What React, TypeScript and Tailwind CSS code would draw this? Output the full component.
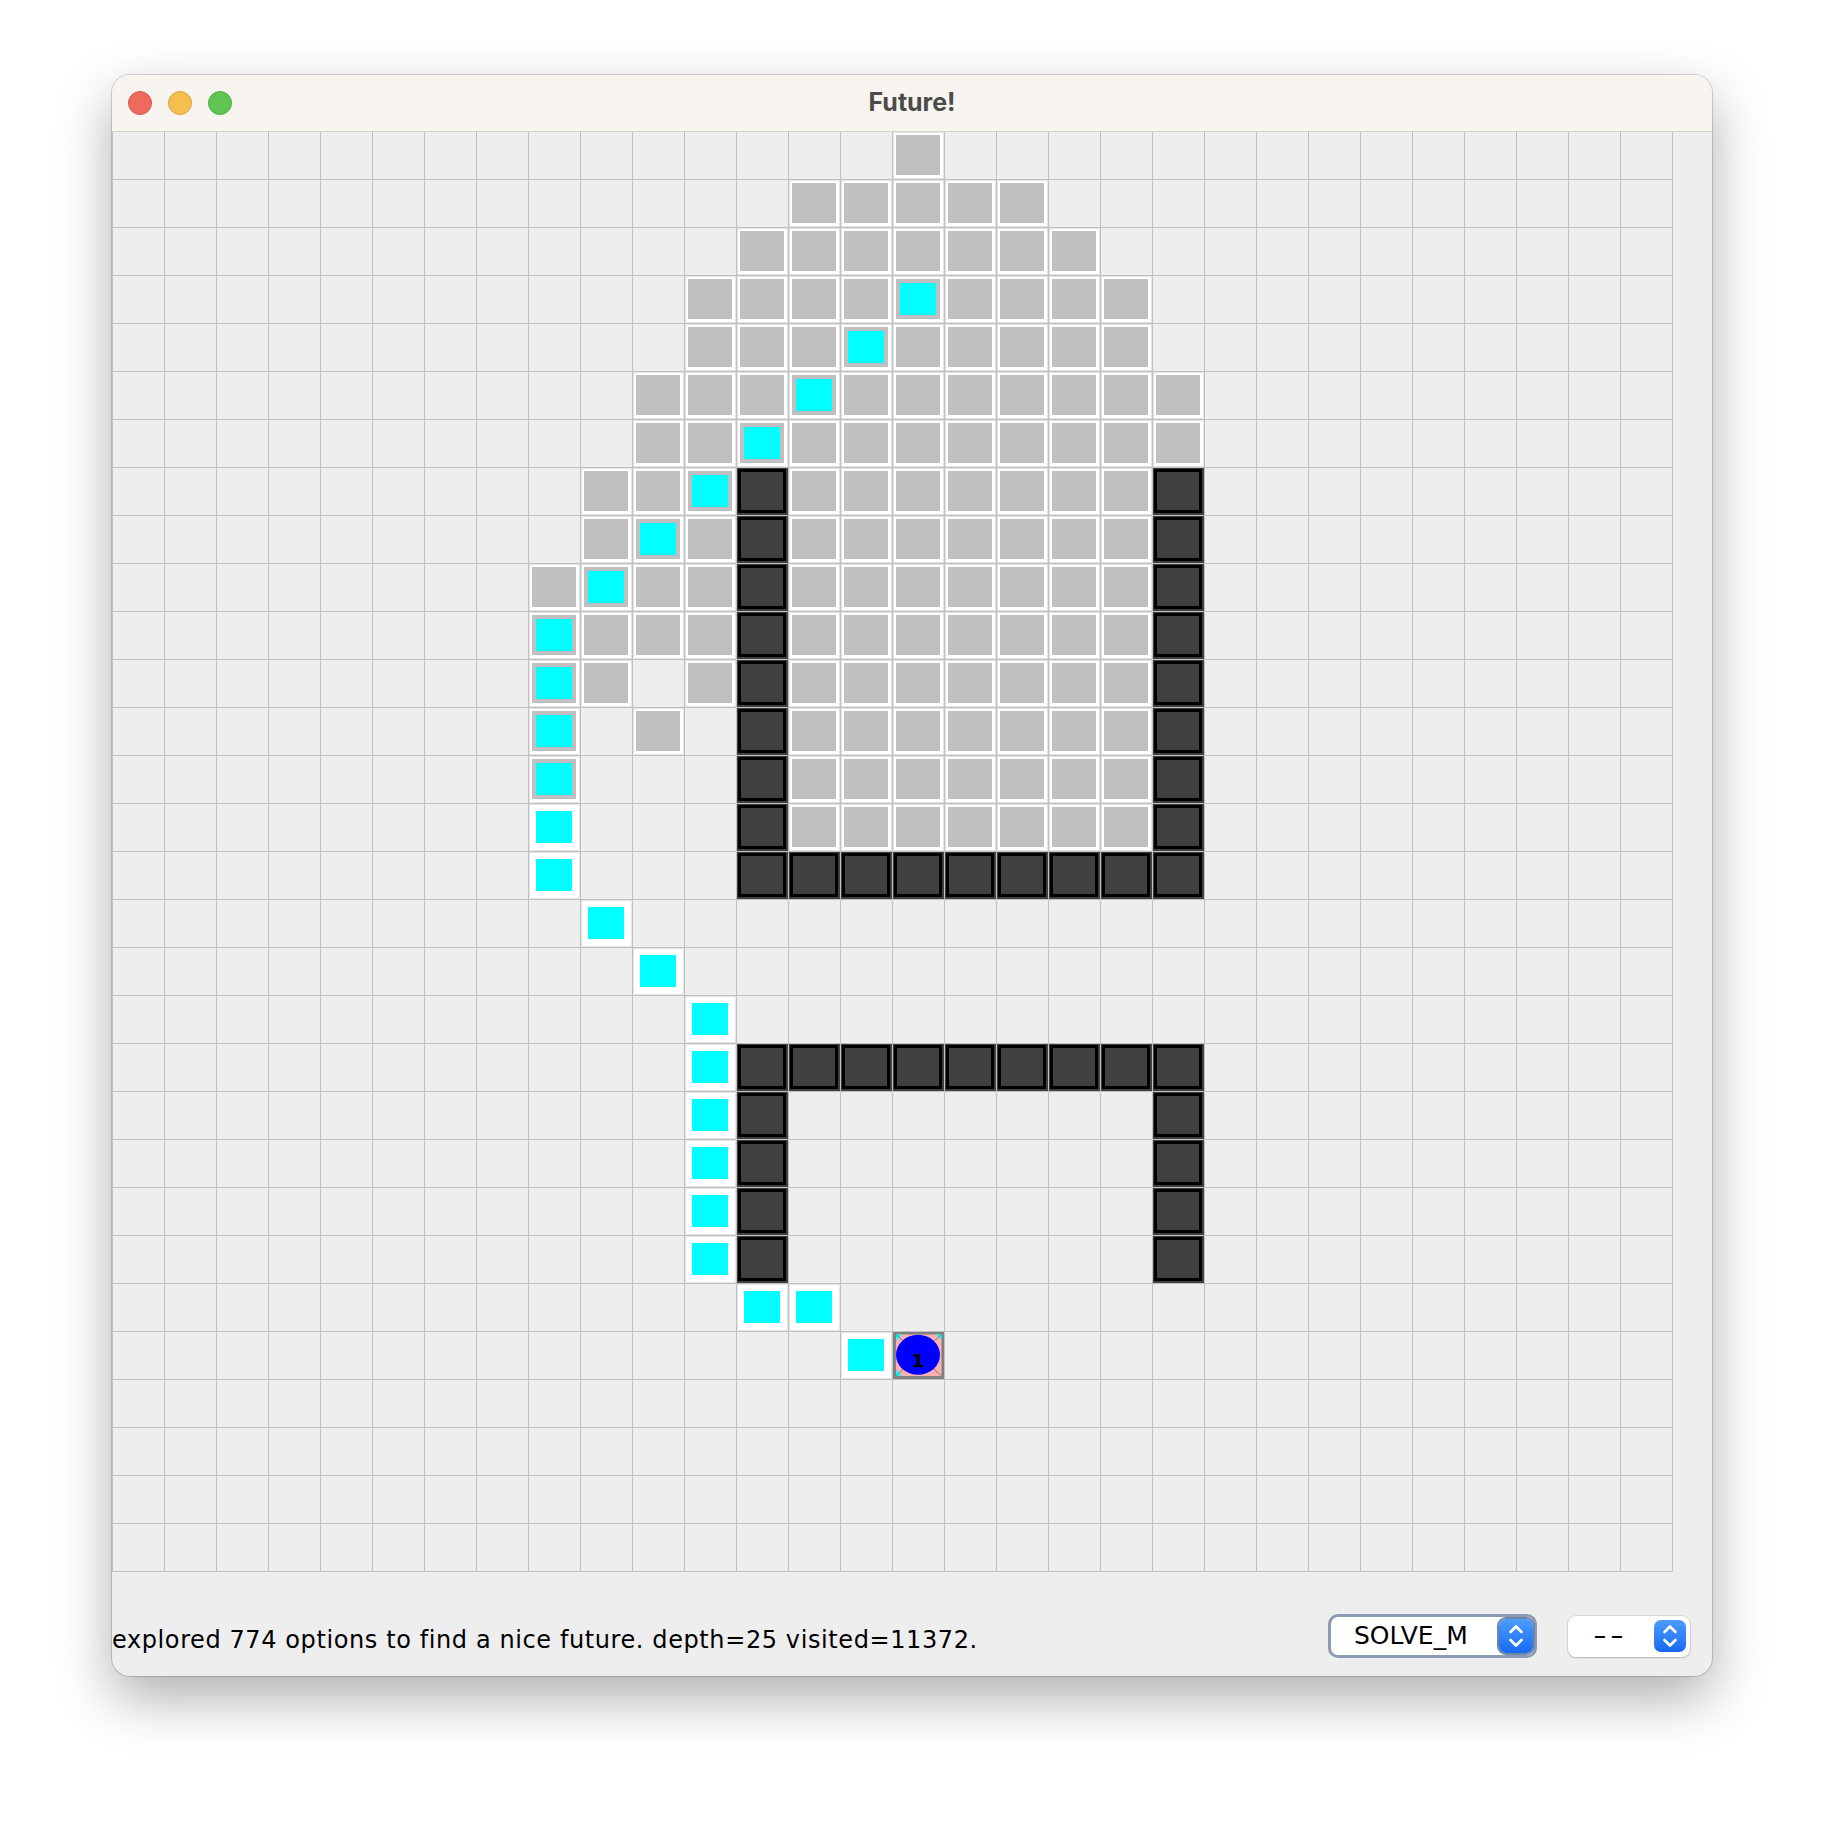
import React from "react";

type Seg = [number, number, string];

function row(segs: Seg[]): string {
  const cells = Array(30).fill(".");
  for (const [from, to, kind] of segs) {
    for (let i = from; i <= to; i++) cells[i] = kind;
  }
  return cells.join("");
}

// . empty, g explored, c path over explored, C path, d wall, A agent
const ROWS: string[] = [
  row([[15, 15, "g"]]),
  row([[13, 17, "g"]]),
  row([[12, 18, "g"]]),
  row([[11, 19, "g"], [15, 15, "c"]]),
  row([[11, 19, "g"], [14, 14, "c"]]),
  row([[10, 20, "g"], [13, 13, "c"]]),
  row([[10, 20, "g"], [12, 12, "c"]]),
  row([[9, 10, "g"], [11, 11, "c"], [12, 12, "d"], [13, 19, "g"], [20, 20, "d"]]),
  row([[9, 9, "g"], [10, 10, "c"], [11, 11, "g"], [12, 12, "d"], [13, 19, "g"], [20, 20, "d"]]),
  row([[8, 8, "g"], [9, 9, "c"], [10, 11, "g"], [12, 12, "d"], [13, 19, "g"], [20, 20, "d"]]),
  row([[8, 8, "c"], [9, 11, "g"], [12, 12, "d"], [13, 19, "g"], [20, 20, "d"]]),
  row([[8, 8, "c"], [9, 9, "g"], [11, 11, "g"], [12, 12, "d"], [13, 19, "g"], [20, 20, "d"]]),
  row([[8, 8, "c"], [10, 10, "g"], [12, 12, "d"], [13, 19, "g"], [20, 20, "d"]]),
  row([[8, 8, "c"], [12, 12, "d"], [13, 19, "g"], [20, 20, "d"]]),
  row([[8, 8, "C"], [12, 12, "d"], [13, 19, "g"], [20, 20, "d"]]),
  row([[8, 8, "C"], [12, 20, "d"]]),
  row([[9, 9, "C"]]),
  row([[10, 10, "C"]]),
  row([[11, 11, "C"]]),
  row([[11, 11, "C"], [12, 20, "d"]]),
  row([[11, 11, "C"], [12, 12, "d"], [20, 20, "d"]]),
  row([[11, 11, "C"], [12, 12, "d"], [20, 20, "d"]]),
  row([[11, 11, "C"], [12, 12, "d"], [20, 20, "d"]]),
  row([[11, 11, "C"], [12, 12, "d"], [20, 20, "d"]]),
  row([[12, 13, "C"]]),
  row([[14, 14, "C"], [15, 15, "A"]]),
  row([]),
  row([]),
  row([]),
  row([]),
];

function Agent() {
  return (
    <svg width="51" height="47" viewBox="0 0 51 47" className="block">
      <rect x="0" y="0" width="51" height="47" fill="#808080" />
      <rect x="3" y="2.5" width="45.5" height="41.5" fill="#ffb0b0" />
      <polygon points="3,2.5 9,2.5 3,9" fill="#00ffff" />
      <polygon points="3,44 9,44 3,37.5" fill="#00ffff" />
      <polygon points="48.5,2.5 43,2.5 48.5,8" fill="#00ffff" />
      <line x1="3" y1="2.5" x2="25.5" y2="23" stroke="#808080" strokeWidth="1" />
      <line x1="48.5" y1="2.5" x2="25.5" y2="23" stroke="#808080" strokeWidth="1" />
      <line x1="3" y1="44" x2="25.5" y2="23" stroke="#808080" strokeWidth="1" />
      <line x1="48.5" y1="44" x2="25.5" y2="23" stroke="#808080" strokeWidth="1" />
      <ellipse cx="25" cy="22.8" rx="22" ry="20" fill="#0000ff" />
      <text
        x="25"
        y="35"
        textAnchor="middle"
        fontFamily="'DejaVu Sans', sans-serif"
        fontWeight="bold"
        fontSize="18"
        fill="#000000"
      >
        1
      </text>
    </svg>
  );
}

function Cell({ kind }: { kind: string }) {
  if (kind === "g") {
    return (
      <div className="border border-[#e4e4e4] bg-white pl-[2px] pt-[2px] pr-[3px] pb-[3px]">
        <div className="h-full bg-[#c0c0c0]" />
      </div>
    );
  }
  if (kind === "c" || kind === "C") {
    return (
      <div className="border border-[#e4e4e4] bg-white pl-[2px] pt-[2px] pr-[3px] pb-[3px]">
        <div className={kind === "c" ? "h-full bg-[#c0c0c0] flex items-center justify-center" : "h-full bg-white flex items-center justify-center"}>
          <div className="w-[36px] h-[32px] bg-[#00ffff]" />
        </div>
      </div>
    );
  }
  if (kind === "d") {
    return (
      <div className="bg-[#404040] pl-px pt-px pr-[2px] pb-[2px]">
        <div className="h-full border-[3px] border-black bg-[#404040]" />
      </div>
    );
  }
  if (kind === "A") {
    return (
      <div className="bg-[#808080]">
        <Agent />
      </div>
    );
  }
  return <div className="bg-[#eeeeee]" />;
}

function Stepper({ size }: { size: "lg" | "sm" }) {
  return (
    <div
      className={
        size === "lg"
          ? "w-[34px] h-[34px] rounded-[7px] bg-linear-to-b from-[#4d9cff] to-[#1569f2] ring-2 ring-[#6f85a6] flex items-center justify-center"
          : "w-[32px] h-[32px] rounded-[7px] bg-linear-to-b from-[#4d9cff] to-[#1569f2] flex items-center justify-center"
      }
    >
      <svg width="18" height="28" viewBox="0 0 18 28" fill="none" stroke="white" strokeWidth="2.6" strokeLinecap="round" strokeLinejoin="round">
        <path d="M3.5 10 L9 4.5 L14.5 10" />
        <path d="M3.5 18 L9 23.5 L14.5 18" />
      </svg>
    </div>
  );
}

export default function App() {
  return (
    <div className="w-[1824px] h-[1824px] bg-white pl-[112px] pt-[75px]">
      <div className="w-[1600px] h-[1601px] rounded-[18px] overflow-hidden bg-[#eeeeee] flex flex-col shadow-[0_0_0_1px_rgba(0,0,0,0.16),0_22px_55px_rgba(0,0,0,0.32)]">
        {/* title bar */}
        <div className="h-[57px] shrink-0 bg-[#f8f4ef] border-b border-[#d6d2cd] flex items-center relative">
          <div className="flex items-center gap-[16px] pl-[16px]">
            <div className="w-[24px] h-[24px] rounded-full bg-[#ee6a5f] border border-[#d5574d]" />
            <div className="w-[24px] h-[24px] rounded-full bg-[#f5bf4f] border border-[#d9a43c]" />
            <div className="w-[24px] h-[24px] rounded-full bg-[#61c554] border border-[#4fa944]" />
          </div>
          <div className="absolute inset-0 flex items-center justify-center pointer-events-none">
            <span className="font-['Inter',sans-serif] font-bold text-[25px] text-[#4b4b4b]">Future!</span>
          </div>
        </div>

        {/* board */}
        <div className="w-[1561px] h-[1441px] shrink-0 bg-[#c0c0c0] p-px grid grid-cols-[repeat(30,51px)] grid-rows-[repeat(30,47px)] gap-px -mt-px">
          {ROWS.map((r, ri) =>
            r.split("").map((k, ci) => <Cell key={ri * 30 + ci} kind={k} />)
          )}
        </div>

        {/* status bar */}
        <div className="flex-1 flex items-center pt-[24px] pr-[22px]">
          <span className="flex-1 mt-[7px] font-['DejaVu_Sans',sans-serif] text-[24px] tracking-[0.6px] text-black whitespace-nowrap">
            explored 774 options to find a nice future. depth=25 visited=11372.
          </span>
          <div className="w-[209px] h-[44px] rounded-[10px] border-[3px] border-[#8b9bb2] bg-white flex items-center pl-[23px] pr-[1px]">
            <span className="flex-1 font-['DejaVu_Sans',sans-serif] text-[25px] text-black">SOLVE_M</span>
            <Stepper size="lg" />
          </div>
          <div className="ml-[31px] w-[122px] h-[41px] rounded-[8px] bg-white shadow-[0_0_0_1px_rgba(0,0,0,0.08),0_1px_2px_rgba(0,0,0,0.18)] flex items-center pl-[25px] pr-[4px]">
            <span className="flex-1">
              <span className="inline-block origin-left scale-x-[1.6] font-['DejaVu_Sans',sans-serif] text-[24px] text-black tracking-[2px]">--</span>
            </span>
            <Stepper size="sm" />
          </div>
        </div>
      </div>
    </div>
  );
}
